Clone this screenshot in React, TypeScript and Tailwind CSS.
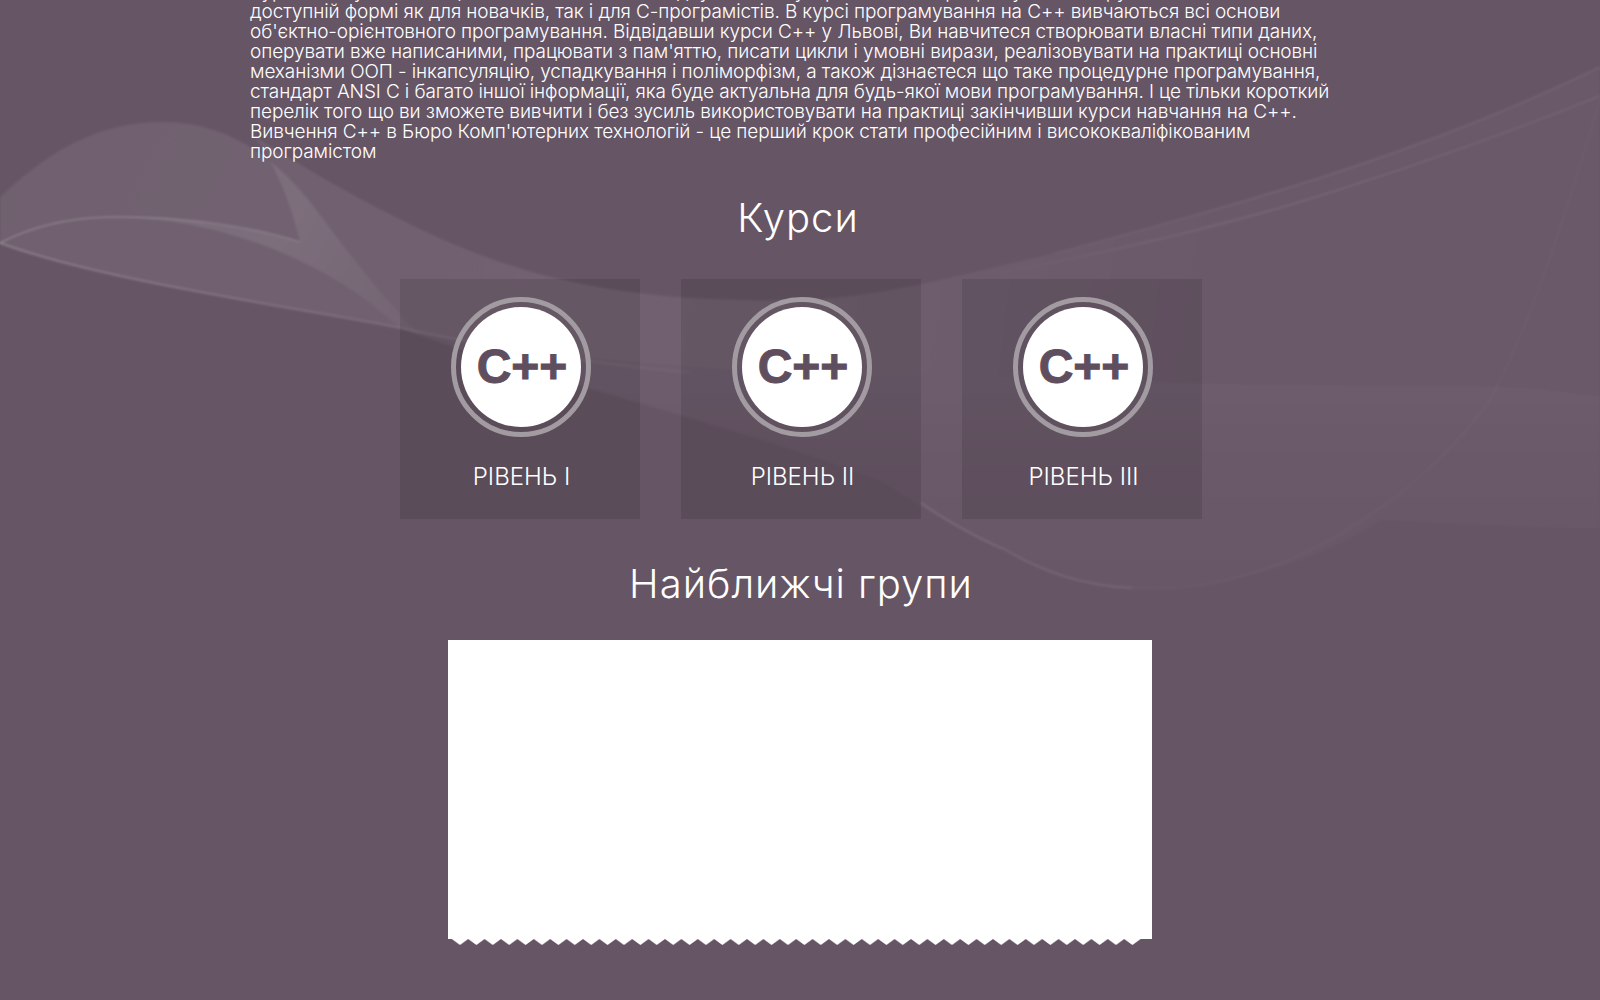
const courses = ["РІВЕНЬ I", "РІВЕНЬ II", "РІВЕНЬ III"];

const intro = [
  "Курси C++ у Львові - це можливість вивчити одну з найпопулярніших мов програмування в зручній і",
  "доступній формі як для новачків, так і для C-програмістів. В курсі програмування на C++ вивчаються всі основи",
  "об'єктно-орієнтовного програмування. Відвідавши курси C++ у Львові, Ви навчитеся створювати власні типи даних,",
  "оперувати вже написаними, працювати з пам'яттю, писати цикли і умовні вирази, реалізовувати на практиці основні",
  "механізми ООП - інкапсуляцію, успадкування і поліморфізм, а також дізнаєтеся що таке процедурне програмування,",
  "стандарт ANSI C і багато іншої інформації, яка буде актуальна для будь-якої мови програмування. І це тільки короткий",
  "перелік того що ви зможете вивчити і без зусиль використовувати на практиці закінчивши курси навчання на C++.",
  "Вивчення C++ в Бюро Комп'ютерних технологій - це перший крок стати професійним і висококваліфікованим",
  "програмістом",
];

function Waves() {
  return (
    <svg
      className="absolute top-0 left-0 h-[1000px] w-[1600px]"
      viewBox="0 0 1600 1000"
      fill="none"
    >
      <defs>
        <filter id="soft" x="-5%" y="-5%" width="110%" height="110%">
          <feGaussianBlur stdDeviation="1.2" />
        </filter>
        <linearGradient id="hump" x1="60" y1="130" x2="420" y2="330" gradientUnits="userSpaceOnUse">
          <stop offset="0" stopColor="#fff" stopOpacity="0.07" />
          <stop offset="0.6" stopColor="#fff" stopOpacity="0.08" />
          <stop offset="1" stopColor="#fff" stopOpacity="0.02" />
        </linearGradient>
        <linearGradient id="band" x1="0" y1="240" x2="1250" y2="400" gradientUnits="userSpaceOnUse">
          <stop offset="0" stopColor="#fff" stopOpacity="0.07" />
          <stop offset="0.5" stopColor="#fff" stopOpacity="0.075" />
          <stop offset="0.75" stopColor="#fff" stopOpacity="0.05" />
          <stop offset="1" stopColor="#fff" stopOpacity="0.025" />
        </linearGradient>
        <linearGradient id="low" x1="900" y1="375" x2="900" y2="590" gradientUnits="userSpaceOnUse">
          <stop offset="0" stopColor="#fff" stopOpacity="0.05" />
          <stop offset="0.45" stopColor="#fff" stopOpacity="0.025" />
          <stop offset="1" stopColor="#fff" stopOpacity="0.015" />
        </linearGradient>
        <linearGradient id="edge" x1="950" y1="0" x2="1600" y2="0" gradientUnits="userSpaceOnUse">
          <stop offset="0" stopColor="#fff" stopOpacity="0" />
          <stop offset="0.5" stopColor="#fff" stopOpacity="0.08" />
          <stop offset="1" stopColor="#fff" stopOpacity="0.06" />
        </linearGradient>
        <linearGradient id="edgeLeft" x1="0" y1="0" x2="700" y2="0" gradientUnits="userSpaceOnUse">
          <stop offset="0" stopColor="#fff" stopOpacity="0.2" />
          <stop offset="1" stopColor="#fff" stopOpacity="0.03" />
        </linearGradient>
      </defs>
      <g filter="url(#soft)">
        {/* hump on the left */}
        <path
          d="M0 197 C60 140 110 122 163 122 C230 122 280 160 320 215 C355 262 385 300 420 335 L400 328 C330 262 220 217 110 217 C60 218 25 230 0 243 Z"
          fill="url(#hump)"
        />
        {/* main ribbon, sweeping up to the right */}
        <path
          d="M255 137 C340 190 430 240 510 265 C600 295 700 302 800 300 C880 298 960 275 1055 253 C1180 220 1400 165 1600 67 L1600 396 C1570 392 1520 386 1463 386 C1300 386 1100 384 921 374 C700 372 560 360 400 328 C280 305 100 280 0 243 C25 230 60 218 110 217 C180 216 250 226 300 242 C290 200 275 165 255 137 Z"
          fill="url(#band)"
        />
        {/* lower ribbon, under the cards */}
        <path
          d="M400 328 C560 360 700 372 921 374 C1100 384 1300 386 1463 386 C1520 386 1570 392 1600 396 L1600 528 C1500 528 1420 520 1380 520 C1340 550 1240 590 1132 588 C1080 586 1040 570 1004 549 C950 530 920 503 880 480 C720 420 540 380 400 328 Z"
          fill="url(#low)"
        />
        {/* thin highlights along the edges */}
        <path d="M0 243 C100 280 280 305 400 328 C480 345 600 365 690 372" stroke="url(#edgeLeft)" strokeWidth="2" />
        <path d="M0 243 C25 230 60 218 110 217 C180 216 250 226 300 242" stroke="url(#edgeLeft)" strokeWidth="1.5" />
        <path d="M1055 253 C1180 220 1400 165 1600 67" stroke="url(#edge)" strokeWidth="2" />
        <path d="M1000 272 C1100 255 1200 230 1280 208 C1390 175 1490 140 1600 96" stroke="url(#edge)" strokeWidth="2" />
        <path d="M921 503 C960 530 1000 548 1004 549 C1040 570 1080 586 1132 588" stroke="#fff" strokeOpacity="0.1" strokeWidth="2" />
        <path d="M1132 588 C1300 600 1440 470 1488 403 C1530 330 1570 200 1600 100" stroke="#fff" strokeOpacity="0.03" strokeWidth="2" />
      </g>
    </svg>
  );
}

function CourseCard({ label }: { label: string }) {
  return (
    <div className="flex h-[240px] w-[240px] flex-col items-center bg-black/10 pt-[18px]">
      <div className="ml-[2px] flex h-[140px] w-[140px] items-center justify-center rounded-full border-[5px] border-[#a39ba2]">
        <div className="flex h-[120px] w-[120px] items-center justify-center rounded-full bg-white">
          <span className="ml-[2px] text-[48px] leading-none font-bold text-[#5f4e5e] [-webkit-text-stroke:1px_#5f4e5e]">
            C++
          </span>
        </div>
      </div>
      <p className="mt-[26px] ml-[3px] font-['Inter',sans-serif] text-[24px] leading-[28px] font-light text-white">
        {label}
      </p>
    </div>
  );
}

export default function App() {
  return (
    <div className="relative h-[1000px] w-full overflow-hidden bg-[#665565] font-['Liberation_Sans',sans-serif] text-white">
      <Waves />
      <div className="relative">
        <div className="mx-auto -mt-[18px] w-[1100px] font-['Inter',sans-serif] text-[19px] leading-[20px] font-light tracking-[-0.11px]">
          {intro.map((line) => (
            <p key={line} className="whitespace-nowrap">
              {line}
            </p>
          ))}
        </div>
        <h2 className="mt-[26px] pr-[4px] text-center font-['Inter',sans-serif] text-[40px] leading-[60px] font-light tracking-[1px]">
          Курси
        </h2>
        <div className="mt-[31px] flex justify-center gap-[41px] pl-[2px]">
          {courses.map((label) => (
            <CourseCard key={label} label={label} />
          ))}
        </div>
        <h2 className="mt-[35px] pl-[2px] text-center font-['Inter',sans-serif] text-[40px] leading-[60px] font-light tracking-[1px]">
          Найближчі групи
        </h2>
        <div className="mx-auto mt-[26px] w-[704px]">
          <div className="h-[299px] bg-white" />
          <svg className="block h-[6px] w-[704px]" viewBox="0 0 704 6">
            <defs>
              <pattern id="teeth" width="16.4" height="6" patternUnits="userSpaceOnUse" x="3.8">
                <path d="M0 0 L8.2 6 L16.4 0 Z" fill="#fff" />
              </pattern>
            </defs>
            <rect x="3.8" width="688.8" height="6" fill="url(#teeth)" />
          </svg>
        </div>
      </div>
    </div>
  );
}
